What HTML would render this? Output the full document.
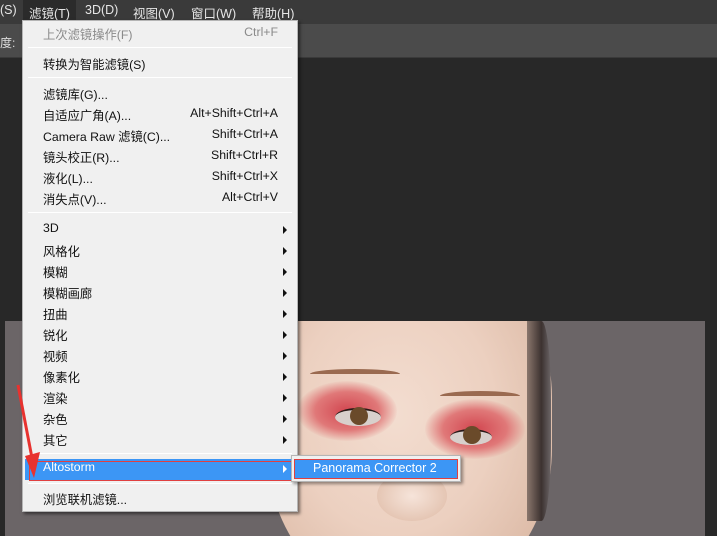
<!DOCTYPE html>
<html style="overflow:hidden"><head><meta charset="utf-8"><style>
*{margin:0;padding:0;box-sizing:border-box}
body{width:717px;height:536px;overflow:hidden;background:#282828;position:relative;font-family:"Liberation Sans","Noto Sans CJK SC",sans-serif;font-size:12px}
.mb{position:absolute;left:0;top:0;width:717px;height:24px;background:#3a3a3a;color:#e6e6e6}
.mb span{position:absolute;top:3px;font-size:12.5px}
.ob{position:absolute;left:0;top:24px;width:717px;height:34px;background:#4b4b4b;border-bottom:1px solid #3a3a3a}
.img{position:absolute;left:5px;top:321px;width:700px;height:215px;background:#6b6567;overflow:hidden}
.menu{position:absolute;left:22px;top:20px;width:276px;height:492px;background:#f0f0f0;border:1px solid #b5b5b5;box-shadow:2px 2px 3px rgba(0,0,0,.5);color:#111;overflow:hidden}
.it{position:absolute;left:20px;font-size:12.3px;white-space:nowrap}
.sc{position:absolute;right:19px;font-size:12.3px}
.ar{position:absolute;left:260px;width:0;height:0;border-left:4px solid #111;border-top:4px solid transparent;border-bottom:4px solid transparent}
.sep{position:absolute;left:5px;right:5px;height:1px;background:#a0a0a0;border-bottom:1px solid #fff}
</style></head><body>
<div class="mb">
<span style="left:0">(S)</span>
<div style="position:absolute;left:23px;top:0;width:53px;height:20px;background:#2b2b2b"></div>
<span style="left:29px">滤镜(T)</span>
<span style="left:85px">3D(D)</span>
<span style="left:133px">视图(V)</span>
<span style="left:191px">窗口(W)</span>
<span style="left:252px">帮助(H)</span>
</div>
<div class="ob"><span style="position:absolute;left:0;top:10px;color:#ddd;font-size:12px">度:</span></div>
<div class="img">
 <div style="position:absolute;left:262px;top:-60px;width:285px;height:340px;border-radius:40% 40% 45% 45%;background:radial-gradient(ellipse at 45% 45%,#f3ddd0 0%,#ecd0c0 45%,#dcbaa6 80%,#c09c8a 100%)"></div>
 <div style="position:absolute;left:522px;top:0;width:24px;height:200px;border-radius:0 40% 40% 0;background:linear-gradient(90deg,#8a766c,#3c3230 60%,#6b6567)"></div>
 <div style="position:absolute;left:292px;top:60px;width:100px;height:60px;border-radius:50%;background:radial-gradient(ellipse,#d24650 0%,#e07878 45%,rgba(236,208,192,0) 72%)"></div>
 <div style="position:absolute;left:420px;top:78px;width:100px;height:60px;border-radius:50%;background:radial-gradient(ellipse,#d24650 0%,#e07878 45%,rgba(236,208,192,0) 72%)"></div>
 <div style="position:absolute;left:330px;top:87px;width:46px;height:18px;border-radius:50%;background:#d8d0cc;border-top:2px solid #2a1a18"></div>
 <div style="position:absolute;left:345px;top:86px;width:18px;height:18px;border-radius:50%;background:#6a4a2a"></div>
 <div style="position:absolute;left:445px;top:108px;width:42px;height:16px;border-radius:50%;background:#d8d0cc;border-top:2px solid #2a1a18"></div>
 <div style="position:absolute;left:458px;top:105px;width:18px;height:18px;border-radius:50%;background:#6a4a2a"></div>
 <div style="position:absolute;left:305px;top:48px;width:90px;height:10px;border-radius:50%;border-top:5px solid #9a6a50"></div>
 <div style="position:absolute;left:435px;top:70px;width:80px;height:10px;border-radius:50%;border-top:5px solid #9a6a50"></div>
 <div style="position:absolute;left:372px;top:150px;width:70px;height:50px;border-radius:50%;background:radial-gradient(ellipse,#f6e4da,#e5c6b4 70%,rgba(0,0,0,0))"></div>
</div>
<div class="menu">
 <div class="it" style="top:4px;color:#8a8a8a">上次滤镜操作(F)</div><div class="sc" style="top:4px;color:#8a8a8a">Ctrl+F</div>
 <div class="sep" style="top:26px"></div>
 <div class="it" style="top:34px">转换为智能滤镜(S)</div>
 <div class="sep" style="top:56px"></div>
 <div class="it" style="top:64px">滤镜库(G)...</div>
 <div class="it" style="top:85px">自适应广角(A)...</div><div class="sc" style="top:85px">Alt+Shift+Ctrl+A</div>
 <div class="it" style="top:106px">Camera Raw 滤镜(C)...</div><div class="sc" style="top:106px">Shift+Ctrl+A</div>
 <div class="it" style="top:127px">镜头校正(R)...</div><div class="sc" style="top:127px">Shift+Ctrl+R</div>
 <div class="it" style="top:148px">液化(L)...</div><div class="sc" style="top:148px">Shift+Ctrl+X</div>
 <div class="it" style="top:169px">消失点(V)...</div><div class="sc" style="top:169px">Alt+Ctrl+V</div>
 <div class="sep" style="top:191px"></div>
 <div class="it" style="top:200px">3D</div><div class="ar" style="top:205px"></div>
 <div class="it" style="top:221px">风格化</div><div class="ar" style="top:226px"></div>
 <div class="it" style="top:242px">模糊</div><div class="ar" style="top:247px"></div>
 <div class="it" style="top:263px">模糊画廊</div><div class="ar" style="top:268px"></div>
 <div class="it" style="top:284px">扭曲</div><div class="ar" style="top:289px"></div>
 <div class="it" style="top:305px">锐化</div><div class="ar" style="top:310px"></div>
 <div class="it" style="top:326px">视频</div><div class="ar" style="top:331px"></div>
 <div class="it" style="top:347px">像素化</div><div class="ar" style="top:352px"></div>
 <div class="it" style="top:368px">渲染</div><div class="ar" style="top:373px"></div>
 <div class="it" style="top:389px">杂色</div><div class="ar" style="top:394px"></div>
 <div class="it" style="top:410px">其它</div><div class="ar" style="top:415px"></div>
 <div class="sep" style="top:432px"></div>
 <div style="position:absolute;left:2px;top:438px;width:270px;height:21px;background:#3c96f5"></div>
 <div style="position:absolute;left:6px;top:440px;width:268px;height:20px;border:1px solid #e04040"></div>
 <div class="it" style="top:439px;color:#fff">Altostorm</div><div class="ar" style="top:444px;border-left-color:#fff"></div>
 <div class="sep" style="top:462px"></div>
 <div class="it" style="top:469px">浏览联机滤镜...</div>
</div>
<div style="position:absolute;left:291px;top:455px;width:170px;height:27px;background:#f0f0f0;border:1px solid #b5b5b5;box-shadow:2px 2px 3px rgba(0,0,0,.4)"></div>
<div style="position:absolute;left:294px;top:459px;width:164px;height:20px;background:#3c96f5;border:1px solid #e04040;color:#fff;font-size:12.5px;padding:1px 0 0 18px">Panorama Corrector 2</div>
<svg style="position:absolute;left:0;top:0" width="717" height="536"><line x1="18" y1="385" x2="32" y2="458" stroke="#e8322f" stroke-width="3"/><polygon points="25,456 40,452 34,478" fill="#e8322f"/></svg>
</body></html>
